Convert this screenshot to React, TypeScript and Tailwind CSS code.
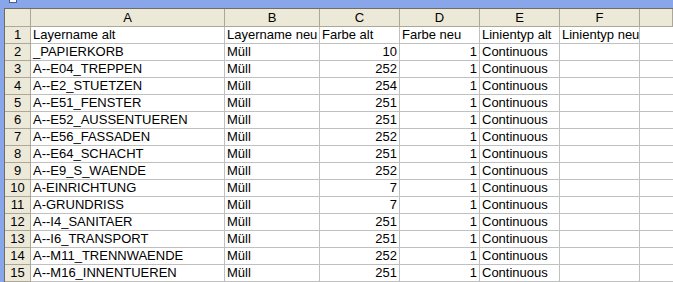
import React from "react";

const rows: [string, string, string, string, string, string][] = [
  ["Layername alt", "Layername neu", "Farbe alt", "Farbe neu", "Linientyp alt", "Linientyp neu"],
  ["_PAPIERKORB", "Müll", "10", "1", "Continuous", ""],
  ["A--E04_TREPPEN", "Müll", "252", "1", "Continuous", ""],
  ["A--E2_STUETZEN", "Müll", "254", "1", "Continuous", ""],
  ["A--E51_FENSTER", "Müll", "251", "1", "Continuous", ""],
  ["A--E52_AUSSENTUEREN", "Müll", "251", "1", "Continuous", ""],
  ["A--E56_FASSADEN", "Müll", "252", "1", "Continuous", ""],
  ["A--E64_SCHACHT", "Müll", "251", "1", "Continuous", ""],
  ["A--E9_S_WAENDE", "Müll", "252", "1", "Continuous", ""],
  ["A-EINRICHTUNG", "Müll", "7", "1", "Continuous", ""],
  ["A-GRUNDRISS", "Müll", "7", "1", "Continuous", ""],
  ["A--I4_SANITAER", "Müll", "251", "1", "Continuous", ""],
  ["A--I6_TRANSPORT", "Müll", "251", "1", "Continuous", ""],
  ["A--M11_TRENNWAENDE", "Müll", "252", "1", "Continuous", ""],
  ["A--M16_INNENTUEREN", "Müll", "251", "1", "Continuous", ""],
];

const letters = ["A", "B", "C", "D", "E", "F", ""];

export default function App() {
  return (
    <div
      className="w-[673px] h-[282px] overflow-hidden bg-[#8aa6ea] flex flex-col text-black"
      style={{ fontFamily: '"Liberation Sans", Arial, sans-serif' }}
    >
      <div className="h-[8px] flex shrink-0">
        <div className="ml-[9px] w-[8px] h-[3px] bg-white border-b border-x border-[#4a5f8c]" />
      </div>
      <div className="flex flex-1">
        <div className="w-[4px] shrink-0" />
        <div className="flex-1 bg-white border-l border-t border-[#6f6d62]">
          <div className="grid grid-cols-[26px_194px_95px_80px_80px_80px_80px_1fr] text-[13px] leading-[16px]">
            <div className="h-[18px] bg-[#ece9d8] border-r border-b border-[#aca899]" />
            {letters.map((l, i) => (
              <div
                key={i}
                className="h-[18px] bg-[#ece9d8] border-r border-b border-[#aca899] flex items-center justify-center"
              >
                {l}
              </div>
            ))}
            {rows.map((r, ri) => (
              <React.Fragment key={ri}>
                <div className="h-[17px] bg-[#ece9d8] border-r border-b border-[#aca899] flex items-center justify-center">
                  {ri + 1}
                </div>
                <div className="h-[17px] border-r border-b border-[#c0c0c0] pl-[2px] flex items-center whitespace-nowrap overflow-hidden">
                  {r[0]}
                </div>
                <div className="h-[17px] border-r border-b border-[#c0c0c0] pl-[2px] flex items-center whitespace-nowrap overflow-hidden">
                  {r[1]}
                </div>
                <div
                  className={
                    ri === 0
                      ? "h-[17px] border-r border-b border-[#c0c0c0] pl-[2px] flex items-center whitespace-nowrap overflow-hidden"
                      : "h-[17px] border-r border-b border-[#c0c0c0] pr-[2px] flex items-center justify-end whitespace-nowrap overflow-hidden"
                  }
                >
                  {r[2]}
                </div>
                <div
                  className={
                    ri === 0
                      ? "h-[17px] border-r border-b border-[#c0c0c0] pl-[2px] flex items-center whitespace-nowrap overflow-hidden"
                      : "h-[17px] border-r border-b border-[#c0c0c0] pr-[2px] flex items-center justify-end whitespace-nowrap overflow-hidden"
                  }
                >
                  {r[3]}
                </div>
                <div className="h-[17px] border-r border-b border-[#c0c0c0] pl-[2px] flex items-center whitespace-nowrap overflow-hidden">
                  {r[4]}
                </div>
                <div className="h-[17px] border-r border-b border-[#c0c0c0] pl-[2px] flex items-center whitespace-nowrap overflow-hidden">
                  {r[5]}
                </div>
                <div className="h-[17px] border-b border-[#c0c0c0]" />
              </React.Fragment>
            ))}
          </div>
        </div>
      </div>
    </div>
  );
}
